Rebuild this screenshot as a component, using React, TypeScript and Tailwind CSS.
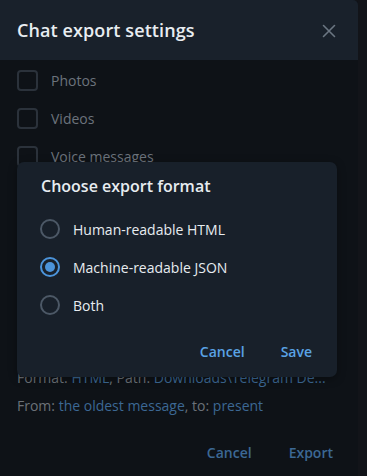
import React from 'react';

const font = { fontFamily: '"Open Sans", "Noto Sans", sans-serif' };

const rows = ['Photos', 'Videos', 'Voice messages'];

const Checkbox: React.FC<{ label: string }> = ({ label }) => (
    <div className="h-[38px] flex items-center gap-[13px]">
        <div className="w-[21px] h-[21px] rounded-[4px] border-2 border-[#2b323b]" />
        <span className="text-[14px] text-[#6c737c]">{label}</span>
    </div>
);

const Radio: React.FC<{ label: string; checked?: boolean }> = ({ label, checked }) => (
    <div className="h-[38px] flex items-center gap-[13px]">
        <div
            className={
                checked
                    ? 'w-[20px] h-[20px] rounded-full border-2 border-[#4b93d9] flex items-center justify-center'
                    : 'w-[20px] h-[20px] rounded-full border-2 border-[#4c5866]'
            }
        >
            {checked && <div className="w-[10px] h-[10px] rounded-full bg-[#4b93d9]" />}
        </div>
        <span className="text-[14px] text-[#e7ecf0]">{label}</span>
    </div>
);

export default function App() {
    return (
        <div className="w-[367px] h-[476px] bg-[#121419] flex overflow-hidden" style={font}>
            <div className="relative w-[358px] h-full bg-[#0e1217] rounded-tr-[5px] overflow-hidden flex flex-col">
                <div className="h-[60px] shrink-0 bg-[#19212b] flex items-center justify-between pl-[17px] pr-[22px]">
                    <span className="text-[18px] font-semibold text-[#e8edf1] tracking-[0.1px]">Chat export settings</span>
                    <svg width="14" height="14" viewBox="0 0 14 14" className="mt-[1px]">
                        <path d="M1.5 1.5 L12.5 12.5 M12.5 1.5 L1.5 12.5" stroke="#6b7682" strokeWidth="1.6" strokeLinecap="round" />
                    </svg>
                </div>

                <div className="px-[17px] pt-[1px] flex flex-col">
                    {rows.map(r => <Checkbox key={r} label={r} />)}
                    {/* the rest of the media options sit under the format popup */}
                    <div className="h-[152px]" />
                    <div className="mt-[41px] h-[20px] leading-[20px] text-[14px] whitespace-nowrap">
                        <span className="text-[#6b7178]">Format: </span>
                        <span className="text-[#3c6894]">HTML</span>
                        <span className="text-[#6b7178]">, Path: </span>
                        <span className="text-[#3c6894]">Downloads\Telegram De...</span>
                    </div>
                    <div className="mt-[8px] h-[20px] leading-[20px] text-[14px] whitespace-nowrap">
                        <span className="text-[#6b7178]">From: </span>
                        <span className="text-[#3c6894]">the oldest message</span>
                        <span className="text-[#6b7178]">, to: </span>
                        <span className="text-[#3c6894]">present</span>
                    </div>
                    <div className="mt-[26px] flex justify-end pr-[8px] gap-[37px] text-[14px] font-semibold text-[#3c6894]">
                        <span>Cancel</span>
                        <span>Export</span>
                    </div>
                </div>

                <div className="absolute left-[17px] top-[162px] w-[320px] h-[215px] rounded-[7px] bg-[#18202a] shadow-[0_2px_8px_rgba(0,0,0,0.35)] flex flex-col">
                    <div className="pl-[24px] pt-[12px] text-[16px] font-semibold text-[#e7ecf0] leading-[24px]">Choose export format</div>
                    <div className="pl-[23px] pt-[12px] flex flex-col">
                        <Radio label="Human-readable HTML" />
                        <Radio label="Machine-readable JSON" checked />
                        <Radio label="Both" />
                    </div>
                    <div className="mt-[17px] flex justify-end pr-[25px] gap-[36px] text-[14px] font-semibold text-[#5aa3e5]">
                        <span>Cancel</span>
                        <span>Save</span>
                    </div>
                </div>
            </div>
        </div>
    );
}
